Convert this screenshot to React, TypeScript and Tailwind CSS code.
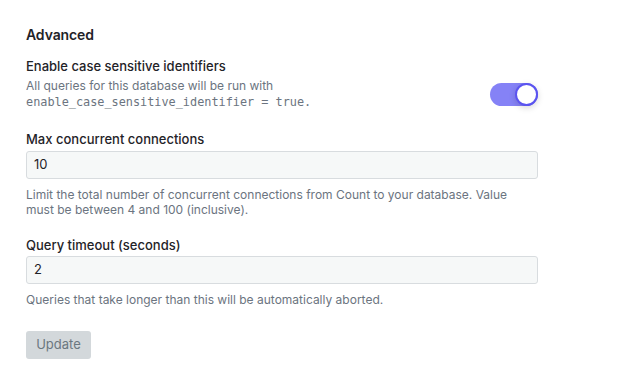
export default function App() {
  return (
    <div
      className="w-[629px] h-[384px] bg-white text-[#1f2328] pl-[26px] pr-[91px] pt-[26px]"
      style={{ fontFamily: 'Inter, "Liberation Sans", sans-serif' }}
    >
      <h2 className="text-[14px] font-semibold leading-[18px] tracking-[-0.1px]">Advanced</h2>

      <div className="mt-[14px] flex items-start justify-between">
        <div>
          <div className="text-[13px] font-medium leading-[16px]">Enable case sensitive identifiers</div>
          <div className="text-[12px] text-[#6b7480] leading-[16px] mt-[4px]">
            All queries for this database will be run with
          </div>
          <div
            className="text-[11.85px] text-[#6b7480] leading-[16px]"
            style={{ fontFamily: '"DejaVu Sans Mono", "Liberation Mono", monospace' }}
          >
            enable_case_sensitive_identifier = true.
          </div>
        </div>
        <div className="relative w-[48px] h-[23px] rounded-full bg-[#8582f6] mt-[25px]">
          <div className="absolute right-0 top-0 w-[23px] h-[23px] rounded-full bg-white border-[2px] border-[#5b54f0] shadow-[0_2px_6px_rgba(0,0,0,0.15)]" />
        </div>
      </div>

      <div className="mt-[21px]">
        <div className="text-[13px] font-medium leading-[16px]">Max concurrent connections</div>
        <div className="mt-[4px] h-[28px] w-full rounded-[3px] border border-[#d8dcdf] bg-[#f6f8f8] flex items-center px-[7px] text-[13px]">
          10
        </div>
        <div className="mt-[8px] text-[12px] leading-[15px] text-[#6b7480]">
          Limit the total number of concurrent connections from Count to your database. Value
          <br />
          must be between 4 and 100 (inclusive).
        </div>
      </div>

      <div className="mt-[20px]">
        <div className="text-[13px] font-medium leading-[16px]">Query timeout (seconds)</div>
        <div className="mt-[3px] h-[28px] w-full rounded-[3px] border border-[#d8dcdf] bg-[#f6f8f8] flex items-center px-[7px] text-[13px]">
          2
        </div>
        <div className="mt-[8px] text-[12px] leading-[15px] text-[#6b7480]">
          Queries that take longer than this will be automatically aborted.
        </div>
      </div>

      <button className="mt-[24px] h-[28px] w-[65px] rounded-[3px] bg-[#d3d8db] text-[#6b7780] text-[13px]">
        Update
      </button>
    </div>
  );
}
